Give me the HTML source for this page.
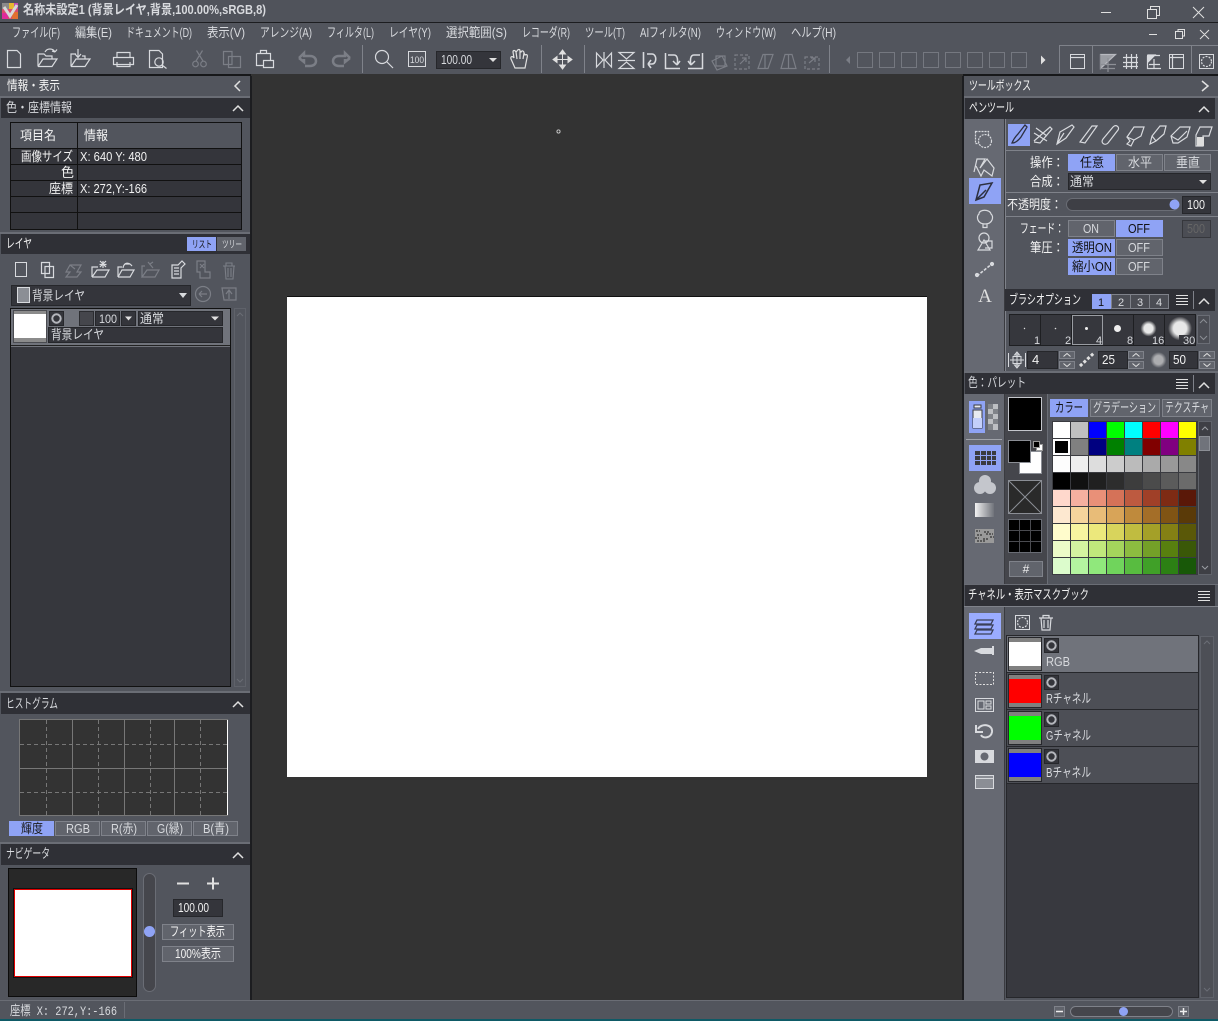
<!DOCTYPE html>
<html lang="ja"><head><meta charset="utf-8"><title>名称未設定1</title>
<style>
html,body{margin:0;padding:0;background:#52555d;width:1218px;height:1021px;overflow:hidden}
svg{display:block;position:absolute;left:0;top:0}
text{font-family:"Liberation Sans","Noto Sans CJK JP",sans-serif;font-size:13px;fill:#d8dade}
.c{text-anchor:middle}
.w{fill:#f2f2f2}
.m{font-family:"Liberation Mono","Noto Sans CJK JP",monospace}
.r rect,rect.r{shape-rendering:crispEdges}
.i{fill:none;stroke:#d8dade;stroke-width:1.2}
.d{fill:none;stroke:#7b7e86;stroke-width:1.2}
.ch{fill:none;stroke:#e0e0e0;stroke-width:1.5}
.hd{fill:#2f3036}
.btn{fill:#61646c;stroke:#7f828a}
.on{fill:#8fa3f5;stroke:#8fa3f5}
.inp{fill:#34353b;stroke:#26272b}
.k{fill:#16171a}
</style></head><body>
<svg width="1218" height="1021" viewBox="0 0 1218 1021" xmlns="http://www.w3.org/2000/svg">
<defs>
<g id="eye"><rect x="0.5" y="0.5" width="14" height="14" fill="#34353b" stroke="#26272b" shape-rendering="crispEdges"/><circle cx="7.5" cy="7.5" r="4.2" fill="none" stroke="#b4b6bc" stroke-width="2"/></g>
<g id="menu"><path d="M0 .5H12M0 3.5H12M0 6.5H12M0 9.5H12" stroke="#e0e0e0" fill="none" shape-rendering="crispEdges"/></g>
<g id="spin"><rect x=".5" y=".5" width="15" height="7" fill="#61646c" stroke="#7f828a" class="r"/><rect x=".5" y="10.5" width="15" height="7" fill="#61646c" stroke="#7f828a" class="r"/><path d="M4.500 5.500L8 2.500L11.500 5.500M4.500 12.500L8 15.500L11.500 12.500" fill="none" stroke="#e0e0e0"/></g>
</defs>

<!-- base -->
<g class="r">
<rect width="1218" height="1021" fill="#52555d"/>
<rect y="0" width="1218" height="22" fill="#50535b"/>
<rect y="22" width="1218" height="1" fill="#1c1d20"/>
<rect y="74" width="1218" height="2" fill="#17181a"/>
<rect x="251" y="74" width="712" height="926" fill="#333333"/>
<rect x="250" y="76" width="2" height="924" fill="#1c1d20"/>
<rect x="962" y="76" width="2" height="924" fill="#1c1d20"/>
<rect y="1000" width="1218" height="1" fill="#6a6d75"/>
<rect y="1019" width="1218" height="2" fill="#0e5a66"/>
<rect x="287" y="296" width="640" height="1" fill="#111"/>
<rect x="287" y="297" width="640" height="480" fill="#fff"/>
</g>
<circle cx="558.500" cy="131.500" r="1.600" fill="none" stroke="#ddd" stroke-width=".8"/>

<!-- title -->
<g class="r"><rect x="2" y="3" width="16" height="16" fill="#d94b6b"/><rect x="2" y="3" width="7" height="6" fill="#8a8a8a"/><rect x="9" y="3" width="5" height="6" fill="#e8b830"/><rect x="14" y="3" width="4" height="6" fill="#c04ab0"/><rect x="2" y="13" width="6" height="6" fill="#e02a9a"/><rect x="12" y="12" width="6" height="7" fill="#e07030"/></g>
<path d="M4 7L10 16L17 5" fill="none" stroke="#d8d8d8" stroke-width="3"/>
<text x="23" y="14" textLength="243" lengthAdjust="spacingAndGlyphs" style="font-weight:700" fill="#ddd">名称未設定1 (背景レイヤ,背景,100.00%,sRGB,8)</text>
<path d="M1101 12.500H1111M1147.500 9.500H1156.500V18.500H1147.500ZM1150.500 9V6.500H1159.500V15.500H1157M1193 7L1204 18M1204 7L1193 18" fill="none" stroke="#e0e0e0"/>

<!-- menu -->
<g>
<text x="12" y="37" textLength="48" lengthAdjust="spacingAndGlyphs">ファイル(F)</text>
<text x="75" y="37" textLength="37" lengthAdjust="spacingAndGlyphs">編集(E)</text>
<text x="126" y="37" textLength="66" lengthAdjust="spacingAndGlyphs">ドキュメント(D)</text>
<text x="207" y="37" textLength="38" lengthAdjust="spacingAndGlyphs">表示(V)</text>
<text x="260" y="37" textLength="52" lengthAdjust="spacingAndGlyphs">アレンジ(A)</text>
<text x="327" y="37" textLength="47" lengthAdjust="spacingAndGlyphs">フィルタ(L)</text>
<text x="389" y="37" textLength="42" lengthAdjust="spacingAndGlyphs">レイヤ(Y)</text>
<text x="446" y="37" textLength="61" lengthAdjust="spacingAndGlyphs">選択範囲(S)</text>
<text x="522" y="37" textLength="48" lengthAdjust="spacingAndGlyphs">レコーダ(R)</text>
<text x="585" y="37" textLength="40" lengthAdjust="spacingAndGlyphs">ツール(T)</text>
<text x="640" y="37" textLength="61" lengthAdjust="spacingAndGlyphs">AIフィルタ(N)</text>
<text x="716" y="37" textLength="60" lengthAdjust="spacingAndGlyphs">ウィンドウ(W)</text>
<text x="791" y="37" textLength="45" lengthAdjust="spacingAndGlyphs">ヘルプ(H)</text>
</g>
<path d="M1149 34.500H1157M1175.500 31.500H1182.500V38.500H1175.500ZM1178 31V29.500H1184.500V36H1183M1200 30L1209 39M1209 30L1200 39" fill="none" stroke="#e0e0e0"/>

<!-- toolbar -->
<g class="i">
<path d="M7.500 50.500H17L20.500 54V67.500H7.500Z"/>
<path d="M38 66.500V54H44L46 56H52V59M38 66.500H52L57 59H43L38 66.500M45 52C47 48 53 48 55 52M55 52L57 49.500M55 52L52 51"/>
<path d="M71 66.500V54H76M71 66.500H85L90 59H76L71 66.500M78 49V57M75 54L78 57.500L81 54M82 56H85V59"/>
<path d="M117 57V52.500H130V57M113.500 57.500H133.500V64.500H113.500ZM117 62V66.500H130V62"/>
<path d="M149.500 50.500H159L162.500 54V67.500H149.500ZM162 65L166.500 68.500"/><circle cx="159" cy="62" r="4.200" />
</g>
<g class="d">
<circle cx="195.500" cy="64" r="2.800"/><circle cx="203.500" cy="64" r="2.800"/><path d="M196 61L202.500 50.500M203 61L196.500 50.500"/>
<path d="M223.500 51.500H232V64.500H223.500ZM228.500 56.500H240.500V67.500H228.500Z"/>
<path d="M299 58L304 53V56H310C318 56 318 66 310 66H305M299 58L304 62V59" stroke-width="2.500"/>
<path d="M350 58L345 53V56H339C331 56 331 66 339 66H344M350 58L345 62V59" stroke-width="2.500"/>
</g>
<g class="i">
<path d="M256.500 53.500H270.500V60M256.500 53.500V65.500H263M260.500 53V50.500H266.500V53M263.500 60.500H273.500V67.500H263.500Z"/>
<circle cx="382" cy="57" r="6.500"/><path d="M387 62L393 68"/>
<rect x="408.500" y="51.500" width="17" height="15" class="r"/>
</g>
<text x="410" y="63" style="font-size:9px" textLength="14" lengthAdjust="spacingAndGlyphs">100</text>
<rect x="436.500" y="51.500" width="64" height="17" class="inp r"/>
<text x="441" y="64" textLength="31" lengthAdjust="spacingAndGlyphs">100.00</text>
<path d="M489 58H497L493 62Z" fill="#e0e0e0"/>
<path d="M515 68L511 59C510 56 513 56 514 58L513 52C513 50 515 50 516 52L517 51C518 49 520 49 520 51L521 52C522 50 524 51 524 53L525 55C527 54 528 55 527 58L525 68ZM516 52L517 59M520 51L520 59M524 53L523 59" fill="none" stroke="#e0e0e0" stroke-width="1.200"/>
<path d="M562.500 51V67M554 59.500H571M562.500 50L559.500 54H565.500ZM562.500 69L559.500 65H565.500ZM553 59.500L557 56.500V62.500ZM572 59.500L568 56.500V62.500Z" fill="#e0e0e0" stroke="#e0e0e0"/>
<g stroke="#7f828a" class="r"><path d="M362.500 45V73M541.500 45V73M584.500 45V73M829.500 45V73M1059.500 45V73M1092.500 45V73M1191.500 45V73M1059 45.500H1218" fill="none"/></g>
<g class="i">
<path d="M596.500 53V67L603 60ZM611.500 53V67L605 60ZM604 52V68"/>
<path d="M619 52.500H634L626.500 59ZM619 68.500H634L626.500 62ZM618 60.500H635"/>
<path d="M643.500 52V68M647 54H652C657 54 657 64 652 64H648M648 64L651 60M648 64L651 68" stroke-width="1.600"/>
<path d="M665.500 53V68.500H680M668 55H674C678 55 678 61 677 65M677 65L673 61M677 65L680 61" stroke-width="1.500"/>
<path d="M702.500 53V68.500H688M700 55H694C690 55 690 61 691 65M691 65L688 61M691 65L695 61" stroke-width="1.500"/>
</g>
<g class="d">
<path d="M712 61L722 56L727 66L717 70ZM716 56H725V66H716Z"/>
<path d="M735 55H749V69H735Z" stroke-dasharray="3 2"/><path d="M740 64L746 58M742 58H746V62"/>
<path d="M758 68.500L763 54.500H773L768 68.500ZM765 68V55"/>
<path d="M781 68.500H796L792 54.500H785ZM788.500 55V68"/>
<path d="M805 57H819V69H805Z" stroke-dasharray="3 2"/><path d="M809 63L815 58M811 58H815V62"/>
</g>
<path d="M850 56V64L846 60Z" fill="#7b7e86"/>
<g fill="none" stroke="#757880" class="r"><rect x="857.500" y="52.500" width="15" height="15"/><rect x="879.500" y="52.500" width="15" height="15"/><rect x="901.500" y="52.500" width="15" height="15"/><rect x="923.500" y="52.500" width="15" height="15"/><rect x="945.500" y="52.500" width="15" height="15"/><rect x="967.500" y="52.500" width="15" height="15"/><rect x="989.500" y="52.500" width="15" height="15"/><rect x="1011.500" y="52.500" width="15" height="15"/></g>
<path d="M1041 55.500V64.500L1045.500 60Z" fill="#e0e0e0"/>
<g class="i">
<rect x="1070.500" y="54.500" width="14" height="14" class="r"/><path d="M1071 57.500H1084"/>
<path d="M1100.500 54.500H1115.500L1100.500 68.500Z" fill="#9a9da3" stroke="#b8bac0"/>
<path d="M1100.500 54.500V68.500H1115M1108 58V72M1101 64.500H1116" stroke="#8d9096"/>
<path d="M1126.500 54V69M1131.500 54V69M1136.500 54V69M1123 57.500H1138M1123 62.500H1138M1123 66.500H1138"/>
<path d="M1147.500 56V68.500H1161M1147 55.500H1160M1154 59V69M1149 64.500H1160" /><path d="M1148 55H1155L1148 62Z" fill="#d8dade"/>
<rect x="1169.500" y="54.500" width="14" height="14" class="r"/><path d="M1172.500 55V68M1170 57.500H1183"/>
<rect x="1199.500" y="54.500" width="14" height="14" class="r"/><circle cx="1206.500" cy="61.500" r="5" stroke-dasharray="2 1.200"/>
</g>

<!-- LEFT: info panel -->
<text x="7" y="90" class="w" textLength="53" lengthAdjust="spacingAndGlyphs">情報・表示</text>
<path d="M240 81L235 86L240 91" class="ch"/>
<rect x="1" y="98" width="249" height="20" class="hd r"/>
<rect x="0" y="96" width="250" height="2" fill="#6a6d75" class="r"/>
<text x="6" y="112" textLength="66" lengthAdjust="spacingAndGlyphs">色・座標情報</text>
<path d="M233 111L238 106L243 111" class="ch"/>
<rect x="10.500" y="122.500" width="231" height="107" fill="#34353b" stroke="#111" class="r"/>
<rect x="11" y="123" width="230" height="25" fill="#52555d" class="r"/>
<g stroke="#111" class="r"><path d="M11 148.500H241M11 164.500H241M11 180.500H241M11 196.500H241M11 212.500H241M77.500 122V229" fill="none"/></g>
<text x="20" y="140" class="w" textLength="36" lengthAdjust="spacingAndGlyphs">項目名</text>
<text x="84" y="140" class="w" textLength="24" lengthAdjust="spacingAndGlyphs">情報</text>
<text x="21" y="161" class="w" textLength="52" lengthAdjust="spacingAndGlyphs">画像サイズ</text>
<text x="80" y="161" class="w" textLength="67" lengthAdjust="spacingAndGlyphs">X: 640 Y: 480</text>
<text x="61" y="177" class="w">色</text>
<text x="49" y="193" class="w" textLength="24" lengthAdjust="spacingAndGlyphs">座標</text>
<text x="80" y="193" class="w" textLength="67" lengthAdjust="spacingAndGlyphs">X: 272,Y:-166</text>

<!-- layer -->
<rect x="1" y="234" width="249" height="20" class="hd r"/>
<rect x="0" y="232" width="250" height="2" fill="#6a6d75" class="r"/>
<text x="6" y="248" class="w" textLength="26" lengthAdjust="spacingAndGlyphs">レイヤ</text>
<rect x="187" y="237" width="29" height="14" fill="#8fa3f5" class="r"/>
<rect x="217" y="237" width="29" height="14" fill="#61646c" class="r"/>
<text x="192" y="248" style="font-size:10px;fill:#111" textLength="20" lengthAdjust="spacingAndGlyphs">リスト</text>
<text x="222" y="248" style="font-size:10px" textLength="20" lengthAdjust="spacingAndGlyphs">ツリー</text>
<g class="i">
<rect x="15.500" y="262.500" width="11" height="14" class="r"/>
<path d="M41.500 262.500H49.500V273.500H41.500ZM45 266.500H53.500V277.500H45Z"/>
</g>
<g class="d">
<path d="M66 272L70 265H81L77 272H81L77 277H66L70 272ZM70 265L75 269"/>
<path d="M142 277V266H145M142 277H155L159 270H147ZM148 262L153 268M153 262L150 264"/>
<path d="M197 261H205V272H210V278H200V272H197ZM200 264L204 268M204 264L200 268"/>
<path d="M223 266H235M225 266L226 279H233L234 266M226 266V263H232V266M228 268V277M231 268V277" stroke-width="1.100"/>
<circle cx="203" cy="294" r="7.500"/><path d="M199 294H207M199 294L202 291M199 294L202 297"/>
<path d="M222 288H236V300H224ZM229 299V291M226 294L229 290L232 294"/>
</g>
<g class="i">
<path d="M92 277V267H98M92 277H105L109 270H97L92 277M103 261V268M99.500 264.500H106.500M100 261L106 267M106 261L100 267"/>
<path d="M118 277V267H122M118 277H130L134 270H122L118 277M123 268C124 262 129 262 132 266M125 264H130"/>
<path d="M172 278V265H178L182 261L185 264L181 268V278ZM174 268H179M174 271H179M174 274H179"/>
</g>
<rect x="11.500" y="285.500" width="179" height="20" class="inp r"/>
<rect x="17.500" y="287.500" width="12" height="15" fill="#8b8e95" stroke="#d8dade" class="r"/>
<text x="32" y="300" textLength="53" lengthAdjust="spacingAndGlyphs">背景レイヤ</text>
<path d="M179 293H187L183 298Z" fill="#d8dade"/>
<rect x="10.500" y="308.500" width="220" height="378" fill="#36373d" stroke="#111" class="r"/>
<rect x="11" y="309" width="219" height="38" fill="#70737b" class="r"/>
<rect x="11" y="345" width="219" height="1" fill="#222" class="r"/>
<rect x="13.500" y="310.500" width="33" height="32" fill="#8b8b8b" stroke="#4a4b50" class="r"/>
<rect x="14" y="314" width="32" height="24" fill="#fff" class="r"/>
<use href="#eye" x="49" y="311"/>
<rect x="79.500" y="311.500" width="14" height="14" fill="#45464c" stroke="#2b2c30" class="r"/>
<rect x="95.500" y="311.500" width="24" height="14" fill="#34353b" stroke="#26272b" class="r"/>
<text x="99" y="323" style="font-size:12px" textLength="18" lengthAdjust="spacingAndGlyphs">100</text>
<rect x="121.500" y="311.500" width="14" height="14" fill="#34353b" stroke="#26272b" class="r"/>
<path d="M125 316.500H132L128.500 320.500Z" fill="#e0e0e0"/>
<rect x="138.500" y="311.500" width="84" height="14" fill="#34353b" stroke="#26272b" class="r"/>
<text x="140" y="323" textLength="24" lengthAdjust="spacingAndGlyphs">通常</text>
<path d="M211 316.500H219L215 320.500Z" fill="#e0e0e0"/>
<rect x="48.500" y="327.500" width="174" height="15" fill="#34353b" stroke="#26272b" class="r"/>
<text x="51" y="339" textLength="53" lengthAdjust="spacingAndGlyphs">背景レイヤ</text>
<rect x="234.500" y="308.500" width="11" height="378" fill="#52555d" stroke="#5f626a" class="r"/>
<path d="M237 316L240 313L243 316" stroke="#6a6d75" fill="none"/>
<path d="M237 679L240 682L243 679" stroke="#6a6d75" fill="none"/>

<!-- histogram -->
<rect x="1" y="693" width="249" height="21" class="hd r"/>
<rect x="0" y="691" width="250" height="2" fill="#6a6d75" class="r"/>
<text x="6" y="708" textLength="52" lengthAdjust="spacingAndGlyphs">ヒストグラム</text>
<path d="M233 707L238 702L243 707" class="ch"/>
<rect x="19.500" y="719.500" width="208" height="96" fill="#333" stroke="#777" class="r"/>
<path d="M227.500 720V815" stroke="#fff" class="r"/>
<path d="M72.500 720V815M124.500 720V815M174.500 720V815M20 768.500H227" stroke="#777" fill="none" class="r"/>
<path d="M46.500 720V815M98.500 720V815M150.500 720V815M200.500 720V815M20 744.500H227M20 792.500H227" stroke="#777" stroke-dasharray="4 3" fill="none" class="r"/>
<rect x="9" y="821" width="45" height="15" fill="#8fa3f5" class="r"/>
<g class="btn r"><rect x="55.500" y="821.500" width="44" height="14"/><rect x="101.500" y="821.500" width="44" height="14"/><rect x="147.500" y="821.500" width="44" height="14"/><rect x="193.500" y="821.500" width="44" height="14"/></g>
<text x="21" y="833" style="fill:#1a1a1a" textLength="22" lengthAdjust="spacingAndGlyphs">輝度</text>
<text x="66" y="833" textLength="24" lengthAdjust="spacingAndGlyphs">RGB</text>
<text x="111" y="833" textLength="26" lengthAdjust="spacingAndGlyphs">R(赤)</text>
<text x="157" y="833" textLength="26" lengthAdjust="spacingAndGlyphs">G(緑)</text>
<text x="203" y="833" textLength="26" lengthAdjust="spacingAndGlyphs">B(青)</text>

<!-- navigator -->
<rect x="1" y="844" width="249" height="21" class="hd r"/>
<rect x="0" y="842" width="250" height="2" fill="#6a6d75" class="r"/>
<text x="6" y="858" textLength="44" lengthAdjust="spacingAndGlyphs">ナビゲータ</text>
<path d="M233 858L238 853L243 858" class="ch"/>
<rect x="8.500" y="868.500" width="128" height="128" fill="#282828" stroke="#0c0c0c" class="r"/>
<rect x="13.500" y="888.500" width="119" height="89" fill="#fff" stroke="#111" class="r"/>
<rect x="14.500" y="889.500" width="117" height="87" fill="#fff" stroke="#e00000" class="r"/>
<rect x="143.500" y="873.500" width="12" height="118" rx="6" fill="#45464c" stroke="#6a6d75"/>
<circle cx="149.500" cy="931.500" r="5.500" fill="#8fa3f5"/>
<path d="M177 883.500H189M207 883.500H219M213 877.500V889.500" stroke="#e0e0e0" stroke-width="2" fill="none"/>
<rect x="173.500" y="899.500" width="49" height="17" class="inp r"/>
<text x="178" y="912" class="w" textLength="31" lengthAdjust="spacingAndGlyphs">100.00</text>
<rect x="162.500" y="924.500" width="71" height="15" class="btn r"/>
<rect x="162.500" y="946.500" width="71" height="15" class="btn r"/>
<text x="170" y="936" class="w" textLength="55" lengthAdjust="spacingAndGlyphs">フィット表示</text>
<text x="175" y="958" class="w" textLength="46" lengthAdjust="spacingAndGlyphs">100%表示</text>

<!-- status -->
<text x="10" y="1015" textLength="107" lengthAdjust="spacingAndGlyphs" class="m">座標 X: 272,Y:-166</text>
<path d="M124.500 1002V1018" stroke="#6a6d75" class="r"/>
<rect x="1054.500" y="1006.500" width="10" height="10" class="btn r"/>
<rect x="1178.500" y="1006.500" width="10" height="10" class="btn r"/>
<path d="M1056 1011.500H1063M1180 1011.500H1187M1183.500 1008V1015" stroke="#eee" stroke-width="1.500" fill="none"/>
<rect x="1070.500" y="1006.500" width="102" height="10" rx="5" fill="#45464c" stroke="#7f828a"/>
<circle cx="1123.500" cy="1011.500" r="4.500" fill="#8fa3f5"/>

<!-- RIGHT: toolbox -->
<text x="969" y="90" class="w" textLength="62" lengthAdjust="spacingAndGlyphs">ツールボックス</text>
<path d="M1202 81L1208 86L1202 91" class="ch"/>
<rect x="964" y="96" width="254" height="2" fill="#6a6d75" class="r"/>
<rect x="965" y="98" width="250" height="21" class="hd r"/>
<text x="969" y="112" class="w" textLength="45" lengthAdjust="spacingAndGlyphs">ペンツール</text>
<path d="M1199 112L1204 107L1209 112" class="ch"/>
<rect x="964" y="119" width="40" height="254" fill="#666972" class="r"/>
<rect x="1004" y="119" width="1" height="254" fill="#3a3b40" class="r"/>
<rect x="1005" y="119" width="1" height="254" fill="#7f828a" class="r"/>

<!-- tool column icons -->
<rect x="969" y="178" width="32" height="26" fill="#8fa3f5" class="r"/>
<g class="i" stroke="#c8cad0">
<rect x="975.500" y="131.500" width="13" height="12" stroke-dasharray="2 1"/><circle cx="985" cy="141" r="6.500" stroke-dasharray="2 1" fill="#666972"/>
<path d="M974 172L977 159H985L980 168L987 159L994 168L992 176L984 170L981 176L976 166"/>
<path d="M985 224C977 224 976 216 979 214C979 209 990 209 991 214C994 216 993 224 985 224ZM983 224V227.500H987V224"/>
<circle cx="984" cy="238" r="5"/><path d="M978 250L984 240L990 250ZM985 241H992V248H985"/>
<path d="M977 276L993 263" stroke-dasharray="3 1.500" stroke-width="1.600"/><circle cx="977" cy="275" r="1.500" fill="#d8dade"/><circle cx="992" cy="264" r="1.500" fill="#d8dade"/>
</g>
<path d="M976 200L980 185L992 183L984 197ZM976 200L986 190" fill="none" stroke="#2d3040" stroke-width="1.500"/>
<text x="985" y="302" class="c" style="font-family:'Liberation Serif',serif;font-size:19px;fill:#e0e0e0">A</text>

<!-- sub tools -->
<rect x="1008" y="124" width="22" height="22" fill="#8fa3f5" class="r"/>
<path d="M1012 143C1014 138 1016 136 1018 134L1025 125L1027 127L1021 137C1018 141 1015 143 1012 143Z" fill="none" stroke="#2d3040" stroke-width="1.300"/>
<g class="i" stroke-width="1">
<path d="M1034 133L1047 141M1034 141L1050 127L1052 129L1040 143L1034 142M1036 128L1047 136"/>
<path d="M1057 144L1060 132L1072 125L1074 127L1066 138ZM1057 144L1064 133"/>
<path d="M1080 142L1092 126H1097L1085 143Z"/>
<path d="M1103 139L1113 127C1116 124 1120 127 1118 130L1108 143C1105 146 1100 143 1103 139Z"/>
<path d="M1127 137L1134 127H1144L1141 136L1134 140ZM1127 137L1130 141L1127 144L1131 146L1134 140"/>
<path d="M1150 144L1152 136L1160 126H1166L1164 134L1156 141ZM1152 136L1156 141"/>
<path d="M1171 136L1180 127H1190L1187 137L1178 143H1173ZM1171 136L1178 140L1187 131"/>
<path d="M1196 135L1200 127H1212L1209 136H1203V146H1196Z"/>
</g>
<rect x="1197" y="137" width="7" height="9" fill="#ddd" class="r"/>

<!-- pen settings -->
<path d="M1006 150.500H1218M1006 192.500H1218M1006 216.500H1218" stroke="#7f828a" class="r"/>
<text x="1030" y="167" class="w" textLength="34" lengthAdjust="spacingAndGlyphs">操作：</text>
<text x="1030" y="186" class="w" textLength="34" lengthAdjust="spacingAndGlyphs">合成：</text>
<rect x="1068" y="154" width="47" height="17" fill="#8fa3f5" class="r"/>
<rect x="1116.500" y="154.500" width="46" height="16" class="btn r"/>
<rect x="1164.500" y="154.500" width="46" height="16" class="btn r"/>
<text x="1080" y="167" style="fill:#111" textLength="24" lengthAdjust="spacingAndGlyphs">任意</text>
<text x="1128" y="167" textLength="24" lengthAdjust="spacingAndGlyphs">水平</text>
<text x="1176" y="167" textLength="24" lengthAdjust="spacingAndGlyphs">垂直</text>
<rect x="1068.500" y="173.500" width="142" height="16" class="inp r"/>
<text x="1070" y="186" textLength="24" lengthAdjust="spacingAndGlyphs">通常</text>
<path d="M1199 180H1207L1203 184Z" fill="#e0e0e0"/>
<text x="1007" y="209" class="w" textLength="55" lengthAdjust="spacingAndGlyphs">不透明度：</text>
<rect x="1066.500" y="198.500" width="112" height="12" rx="6" fill="#3e3f45" stroke="#6a6d75"/>
<circle cx="1174.500" cy="204.500" r="5" fill="#8fa3f5"/>
<rect x="1182.500" y="196.500" width="28" height="17" class="inp r"/>
<text x="1187" y="209" class="w" textLength="18" lengthAdjust="spacingAndGlyphs">100</text>
<text x="1020" y="233" class="w" textLength="44" lengthAdjust="spacingAndGlyphs">フェード：</text>
<rect x="1068.500" y="220.500" width="46" height="16" class="btn r"/>
<rect x="1116" y="220" width="47" height="17" fill="#8fa3f5" class="r"/>
<text x="1083" y="233" textLength="16" lengthAdjust="spacingAndGlyphs">ON</text>
<text x="1128" y="233" style="fill:#111" textLength="22" lengthAdjust="spacingAndGlyphs">OFF</text>
<rect x="1182.500" y="220.500" width="28" height="17" fill="#4b4d54" stroke="#36373c" class="r"/>
<text x="1187" y="233" style="fill:#666" textLength="18" lengthAdjust="spacingAndGlyphs">500</text>
<text x="1030" y="252" class="w" textLength="34" lengthAdjust="spacingAndGlyphs">筆圧：</text>
<rect x="1068" y="239" width="47" height="17" fill="#8fa3f5" class="r"/>
<rect x="1116.500" y="239.500" width="46" height="16" class="btn r"/>
<text x="1072" y="252" style="fill:#111" textLength="40" lengthAdjust="spacingAndGlyphs">透明ON</text>
<text x="1128" y="252" textLength="22" lengthAdjust="spacingAndGlyphs">OFF</text>
<rect x="1068" y="258" width="47" height="17" fill="#8fa3f5" class="r"/>
<rect x="1116.500" y="258.500" width="46" height="16" class="btn r"/>
<text x="1072" y="271" style="fill:#111" textLength="40" lengthAdjust="spacingAndGlyphs">縮小ON</text>
<text x="1128" y="271" textLength="22" lengthAdjust="spacingAndGlyphs">OFF</text>

<!-- brush option -->
<rect x="1005" y="289" width="210" height="22" class="hd r"/>
<text x="1009" y="304" class="w" textLength="72" lengthAdjust="spacingAndGlyphs">ブラシオプション</text>
<rect x="1092" y="294" width="19" height="15" fill="#8fa3f5" class="r"/>
<rect x="1111.500" y="294.500" width="57" height="14" fill="#4b4d54" stroke="#7f828a" class="r"/>
<path d="M1130.500 295V308M1149.500 295V308" stroke="#7f828a" class="r"/>
<text x="1098" y="306" style="fill:#111;font-size:11px">1</text><text x="1118" y="306" style="font-size:11px">2</text><text x="1137" y="306" style="font-size:11px">3</text><text x="1156" y="306" style="font-size:11px">4</text>
<use href="#menu" x="1176" y="295"/>
<path d="M1193.500 291V309" stroke="#7f828a" class="r"/>
<path d="M1199 304L1204 299L1209 304" class="ch"/>

<rect x="1009.500" y="314.500" width="186" height="31" fill="#36373d" stroke="#1e1f22" class="r"/>
<path d="M1040.500 315V345M1071.500 315V345M1102.500 315V345M1133.500 315V345M1164.500 315V345" stroke="#1e1f22" class="r"/>
<rect x="1072.500" y="315.500" width="30" height="29" fill="none" stroke="#9a9da3" class="r"/>
<defs><radialGradient id="g1"><stop offset="0" stop-color="#e8e8e8"/><stop offset=".55" stop-color="#e8e8e8"/><stop offset="1" stop-color="#e8e8e8" stop-opacity="0"/></radialGradient></defs>
<circle cx="1024.500" cy="328.500" r=".7" fill="#ddd"/><circle cx="1055.500" cy="328.500" r=".8" fill="#ddd"/><circle cx="1086.500" cy="328.500" r="1.500" fill="#eee"/><circle cx="1117.500" cy="328.500" r="3.500" fill="#eee"/>
<circle cx="1148.500" cy="328.500" r="8" fill="url(#g1)"/><circle cx="1180" cy="328.500" r="12" fill="url(#g1)"/>
<rect x="1179" y="335" width="16" height="10" fill="#36373d" class="r"/>
<text x="1034" y="344" style="font-size:11px">1</text><text x="1065" y="344" style="font-size:11px">2</text><text x="1096" y="344" style="font-size:11px">4</text><text x="1127" y="344" style="font-size:11px">8</text><text x="1152" y="344" style="font-size:11px">16</text><text x="1183" y="344" style="font-size:11px">30</text>
<rect x="1197.500" y="315.500" width="12" height="28" fill="#4b4d54" stroke="#6a6d75" class="r"/>
<path d="M1200 323L1203.500 319.500L1207 323M1200 336L1203.500 339.500L1207 336" fill="none" stroke="#8b8e95"/>

<path d="M1008.500 353V367M1025.500 353V367M1010 360H1024M1017 352V368M1017 352L1014.500 355H1019.500ZM1017 368L1014.500 365H1019.500ZM1013 356.500H1021V363.500H1013Z" fill="none" stroke="#d8dade"/>
<rect x="1027.500" y="351.500" width="30" height="17" class="inp r"/><text x="1032" y="364" class="w">4</text>
<use href="#spin" x="1059" y="351"/>
<path d="M1080 366L1094 353" stroke="#e0e0e0" stroke-width="3" stroke-dasharray="3 2"/>
<rect x="1098.500" y="351.500" width="29" height="17" class="inp r"/><text x="1102" y="364" class="w" textLength="13" lengthAdjust="spacingAndGlyphs">25</text>
<use href="#spin" x="1128" y="351"/>
<circle cx="1158.500" cy="360" r="8" fill="url(#g1)" opacity=".6"/>
<rect x="1169.500" y="351.500" width="28" height="17" class="inp r"/><text x="1173" y="364" class="w" textLength="13" lengthAdjust="spacingAndGlyphs">50</text>
<use href="#spin" x="1199" y="351"/>

<!-- palette -->
<rect x="964" y="371" width="254" height="2" fill="#6a6d75" class="r"/>
<rect x="965" y="373" width="250" height="21" class="hd r"/>
<text x="968" y="387" textLength="58" lengthAdjust="spacingAndGlyphs">色：パレット</text>
<use href="#menu" x="1176" y="379"/>
<path d="M1193.500 375V392" stroke="#7f828a" class="r"/>
<path d="M1199 388L1204 383L1209 388" class="ch"/>
<rect x="964" y="394" width="40" height="190" fill="#666972" class="r"/>
<rect x="1004" y="394" width="1" height="190" fill="#3a3b40" class="r"/>
<rect x="1005" y="394" width="42" height="190" fill="#45464c" class="r"/>
<rect x="1047" y="394" width="1" height="190" fill="#6a6d75" class="r"/>
<rect x="969" y="401" width="16" height="32" fill="#8fa3f5" class="r"/>
<path d="M974 405H981V408H974ZM973 410H982V428H973Z" fill="#e8eaf0" stroke="#3a3b40"/>
<rect x="973" y="418" width="9" height="10" fill="#c4cffa" class="r"/>
<g class="r"><rect x="988" y="404" width="10" height="26" fill="#bcbec2"/><rect x="988" y="404" width="5" height="5" fill="#808389"/><rect x="993" y="409" width="5" height="5" fill="#808389"/><rect x="988" y="414" width="5" height="5" fill="#808389"/><rect x="993" y="419" width="5" height="5" fill="#808389"/><rect x="988" y="424" width="5" height="6" fill="#808389"/></g>
<rect x="966" y="439" width="36" height="1" fill="#a0a3aa" class="r"/>
<rect x="969" y="445" width="32" height="26" fill="#8fa3f5" class="r"/>
<g fill="#3a3b40" class="r"><rect x="975" y="451" width="5" height="4"/><rect x="981" y="451" width="5" height="4"/><rect x="987" y="451" width="4" height="4"/><rect x="992" y="451" width="4" height="4"/><rect x="975" y="456" width="5" height="4"/><rect x="981" y="456" width="5" height="4"/><rect x="987" y="456" width="4" height="4"/><rect x="992" y="456" width="4" height="4"/><rect x="975" y="461" width="5" height="4"/><rect x="981" y="461" width="5" height="4"/><rect x="987" y="461" width="4" height="4"/><rect x="992" y="461" width="4" height="4"/></g>
<g fill="#c4c6cc"><circle cx="985" cy="481" r="6"/><circle cx="980" cy="488" r="6"/><circle cx="990" cy="488" r="6"/></g>
<defs><linearGradient id="g2"><stop offset="0" stop-color="#f2f2f2"/><stop offset="1" stop-color="#70737a"/></linearGradient></defs>
<rect x="975" y="503" width="19" height="14" fill="url(#g2)" class="r"/>
<rect x="975" y="529" width="19" height="14" fill="#9a9a9a" class="r"/>
<path d="M976 531H980M984 532H990M977 535H982M986 534H993M975 538H979M983 539H988M990 537H994M977 541H985" stroke="#333" stroke-width="1.300" stroke-dasharray="2 1"/>

<rect x="1008.500" y="397.500" width="33" height="33" fill="#000" stroke="#c4c6cc" class="r"/>
<rect x="1019.500" y="451.500" width="22" height="22" fill="#fff" stroke="#8b8e95" class="r"/>
<rect x="1008.500" y="440.500" width="22" height="22" fill="#000" stroke="#8b8e95" class="r"/>
<rect x="1036.500" y="444.500" width="6" height="6" fill="#fff" stroke="#999" class="r"/>
<rect x="1033.500" y="441.500" width="6" height="6" fill="#000" stroke="#999" class="r"/>
<rect x="1008.500" y="480.500" width="33" height="33" fill="#2a2a2a" stroke="#8b8e95" class="r"/>
<path d="M1009 481L1041 513M1041 481L1009 513" stroke="#8b8e95"/>
<rect x="1008.500" y="519.500" width="33" height="33" fill="#000" stroke="#6a6d75" class="r"/>
<path d="M1019.500 520V552M1030.500 520V552M1009 530.500H1041M1009 541.500H1041" stroke="#4a4b50" class="r"/>
<rect x="1009.500" y="561.500" width="33" height="15" class="btn r"/>
<text x="1026" y="573" class="c w" style="font-size:12px">#</text>

<rect x="1050" y="399" width="38" height="18" fill="#8fa3f5" class="r"/>
<rect x="1090.500" y="399.500" width="69" height="17" class="btn r"/>
<rect x="1162.500" y="399.500" width="49" height="17" class="btn r"/>
<text x="1055" y="412" style="fill:#111" textLength="28" lengthAdjust="spacingAndGlyphs">カラー</text>
<text x="1093" y="412" textLength="63" lengthAdjust="spacingAndGlyphs">グラデーション</text>
<text x="1165" y="412" textLength="44" lengthAdjust="spacingAndGlyphs">テクスチャ</text>

<rect x="1052" y="421" width="146" height="154" fill="#3a3b40" class="r"/>
<g class="r">
<rect x="1053" y="422" width="17" height="16" fill="#ffffff"/><rect x="1071" y="422" width="17" height="16" fill="#c0c0c0"/><rect x="1089" y="422" width="17" height="16" fill="#0000ff"/><rect x="1107" y="422" width="17" height="16" fill="#00ff00"/><rect x="1125" y="422" width="17" height="16" fill="#00ffff"/><rect x="1143" y="422" width="17" height="16" fill="#ff0000"/><rect x="1161" y="422" width="17" height="16" fill="#ff00ff"/><rect x="1179" y="422" width="17" height="16" fill="#ffff00"/>
<rect x="1053" y="439" width="17" height="16" fill="#ffffff"/><rect x="1071" y="439" width="17" height="16" fill="#808080"/><rect x="1089" y="439" width="17" height="16" fill="#000080"/><rect x="1107" y="439" width="17" height="16" fill="#008000"/><rect x="1125" y="439" width="17" height="16" fill="#008080"/><rect x="1143" y="439" width="17" height="16" fill="#800000"/><rect x="1161" y="439" width="17" height="16" fill="#800080"/><rect x="1179" y="439" width="17" height="16" fill="#808000"/>
<rect x="1055" y="441" width="13" height="12" fill="#000"/>
<rect x="1053" y="456" width="17" height="16" fill="#fdfdfd"/><rect x="1071" y="456" width="17" height="16" fill="#eeeeee"/><rect x="1089" y="456" width="17" height="16" fill="#dddddd"/><rect x="1107" y="456" width="17" height="16" fill="#cccccc"/><rect x="1125" y="456" width="17" height="16" fill="#bbbbbb"/><rect x="1143" y="456" width="17" height="16" fill="#aaaaaa"/><rect x="1161" y="456" width="17" height="16" fill="#999999"/><rect x="1179" y="456" width="17" height="16" fill="#888888"/>
<rect x="1053" y="473" width="17" height="16" fill="#000000"/><rect x="1071" y="473" width="17" height="16" fill="#111111"/><rect x="1089" y="473" width="17" height="16" fill="#202020"/><rect x="1107" y="473" width="17" height="16" fill="#2d2d2d"/><rect x="1125" y="473" width="17" height="16" fill="#3d3d3d"/><rect x="1143" y="473" width="17" height="16" fill="#4b4b4b"/><rect x="1161" y="473" width="17" height="16" fill="#5b5b5b"/><rect x="1179" y="473" width="17" height="16" fill="#6b6b6b"/>
<rect x="1053" y="490" width="17" height="16" fill="#ffd8cc"/><rect x="1071" y="490" width="17" height="16" fill="#f5b0a0"/><rect x="1089" y="490" width="17" height="16" fill="#e99078"/><rect x="1107" y="490" width="17" height="16" fill="#d57258"/><rect x="1125" y="490" width="17" height="16" fill="#bd5a40"/><rect x="1143" y="490" width="17" height="16" fill="#a04028"/><rect x="1161" y="490" width="17" height="16" fill="#7e2b14"/><rect x="1179" y="490" width="17" height="16" fill="#5a1808"/>
<rect x="1053" y="507" width="17" height="16" fill="#fde8d0"/><rect x="1071" y="507" width="17" height="16" fill="#f5d49c"/><rect x="1089" y="507" width="17" height="16" fill="#e8bc78"/><rect x="1107" y="507" width="17" height="16" fill="#d8a458"/><rect x="1125" y="507" width="17" height="16" fill="#bf8a3c"/><rect x="1143" y="507" width="17" height="16" fill="#a46e28"/><rect x="1161" y="507" width="17" height="16" fill="#805414"/><rect x="1179" y="507" width="17" height="16" fill="#5a3a08"/>
<rect x="1053" y="524" width="17" height="16" fill="#fffccc"/><rect x="1071" y="524" width="17" height="16" fill="#f7f4a0"/><rect x="1089" y="524" width="17" height="16" fill="#ece87c"/><rect x="1107" y="524" width="17" height="16" fill="#d8d45c"/><rect x="1125" y="524" width="17" height="16" fill="#c0bc40"/><rect x="1143" y="524" width="17" height="16" fill="#a4a028"/><rect x="1161" y="524" width="17" height="16" fill="#848014"/><rect x="1179" y="524" width="17" height="16" fill="#5a5808"/>
<rect x="1053" y="541" width="17" height="16" fill="#ecfcc8"/><rect x="1071" y="541" width="17" height="16" fill="#d4f4a0"/><rect x="1089" y="541" width="17" height="16" fill="#c0e87c"/><rect x="1107" y="541" width="17" height="16" fill="#a4d45c"/><rect x="1125" y="541" width="17" height="16" fill="#8cbc40"/><rect x="1143" y="541" width="17" height="16" fill="#74a028"/><rect x="1161" y="541" width="17" height="16" fill="#58800f"/><rect x="1179" y="541" width="17" height="16" fill="#3a5808"/>
<rect x="1053" y="558" width="17" height="16" fill="#dcfccc"/><rect x="1071" y="558" width="17" height="16" fill="#b4f4a0"/><rect x="1089" y="558" width="17" height="16" fill="#90e87c"/><rect x="1107" y="558" width="17" height="16" fill="#70d45c"/><rect x="1125" y="558" width="17" height="16" fill="#58bc40"/><rect x="1143" y="558" width="17" height="16" fill="#40a028"/><rect x="1161" y="558" width="17" height="16" fill="#2c8014"/><rect x="1179" y="558" width="17" height="16" fill="#185808"/>
</g>
<rect x="1198.500" y="421.500" width="13" height="153" fill="#3e3f45" stroke="#5f626a" class="r"/>
<rect x="1199.500" y="436.500" width="10" height="14" fill="#70737b" stroke="#8b8e95" class="r"/>
<path d="M1202 430L1205 427L1208 430M1202 566L1205 569L1208 566" fill="none" stroke="#9a9da3"/>

<!-- channel -->
<rect x="964" y="584" width="254" height="1" fill="#6a6d75" class="r"/>
<rect x="965" y="585" width="250" height="21" class="hd r"/>
<text x="968" y="599" class="w" textLength="121" lengthAdjust="spacingAndGlyphs">チャネル・表示マスクブック</text>
<use href="#menu" x="1198" y="591"/>
<rect x="964" y="606" width="254" height="1" fill="#7f828a" class="r"/>
<rect x="964" y="607" width="40" height="393" fill="#666972" class="r"/>
<rect x="1004" y="607" width="1" height="393" fill="#3a3b40" class="r"/>
<rect x="969" y="613" width="32" height="26" fill="#9aacff" class="r"/>
<path d="M977 620H993L991 624H975ZM977 625H993L991 629H975ZM977 630H993L991 634H975Z" fill="none" stroke="#3a3f58" stroke-width="1.300"/>
<path d="M974 651L981 648H992V646H994V655H992V654H981Z" fill="#d8dade"/>
<rect x="975.500" y="672.500" width="18" height="12" fill="none" stroke="#e0e0e0" stroke-dasharray="2 1.500" class="r"/>
<path d="M975.500 698.500H993.500V711.500H975.500ZM978 701V709H984V701ZM986 701H991V704H986ZM986 706H991V709H986Z" fill="none" stroke="#d8dade"/>
<path d="M978 729C981 723 993 724 992 732C991 738 983 739 981 735M976 725V732H983" fill="none" stroke="#d8dade" stroke-width="2"/>
<rect x="975" y="750" width="19" height="13" fill="#d8dade" class="r"/><circle cx="984.500" cy="756.500" r="4" fill="#666972"/>
<rect x="975.500" y="775.500" width="18" height="13" fill="#8b8e95" stroke="#d8dade" class="r"/><path d="M976 778.500H993" stroke="#d8dade"/>

<rect x="1015.500" y="615.500" width="14" height="14" class="i r"/><circle cx="1022.500" cy="622.500" r="5" class="i" stroke-dasharray="2 1.200"/>
<path d="M1039 618H1053M1041 618L1042 630H1050L1051 618M1043 618V615.500H1049V618M1044 620V628M1048 620V628" class="i"/>

<rect x="1006.500" y="635.500" width="192" height="362" fill="#38393f" stroke="#26272b" class="r"/>
<rect x="1007" y="636" width="191" height="36" fill="#70737b" class="r"/>
<rect x="1007" y="673" width="191" height="36" fill="#4d4f56" class="r"/>
<rect x="1007" y="710" width="191" height="36" fill="#4d4f56" class="r"/>
<rect x="1007" y="747" width="191" height="36" fill="#4d4f56" class="r"/>
<path d="M1007 672.500H1198M1007 709.500H1198M1007 746.500H1198M1007 783.500H1198" stroke="#26272b" class="r"/>
<g class="r" stroke="#26272b">
<rect x="1008.500" y="637.500" width="33" height="33" fill="#808080"/>
<rect x="1008.500" y="674.500" width="33" height="33" fill="#808080"/>
<rect x="1008.500" y="711.500" width="33" height="33" fill="#808080"/>
<rect x="1008.500" y="748.500" width="33" height="33" fill="#808080"/>
</g>
<g class="r">
<rect x="1009" y="642" width="32" height="24" fill="#fff"/>
<rect x="1009" y="679" width="32" height="24" fill="#f00"/>
<rect x="1009" y="716" width="32" height="24" fill="#0f0"/>
<rect x="1009" y="753" width="32" height="24" fill="#00f"/>
</g>
<use href="#eye" x="1044" y="638"/><use href="#eye" x="1044" y="675"/><use href="#eye" x="1044" y="712"/><use href="#eye" x="1044" y="749"/>
<text x="1046" y="666" textLength="24" lengthAdjust="spacingAndGlyphs">RGB</text>
<text x="1046" y="703" textLength="45" lengthAdjust="spacingAndGlyphs">Rチャネル</text>
<text x="1046" y="740" textLength="45" lengthAdjust="spacingAndGlyphs">Gチャネル</text>
<text x="1046" y="777" textLength="45" lengthAdjust="spacingAndGlyphs">Bチャネル</text>
<rect x="1200.500" y="636.500" width="13" height="361" fill="#4d4f56" stroke="#5f626a" class="r"/>
<path d="M1204 644L1207 641L1210 644M1204 988L1207 991L1210 988" fill="none" stroke="#6a6d75"/>
</svg>
</body></html>
